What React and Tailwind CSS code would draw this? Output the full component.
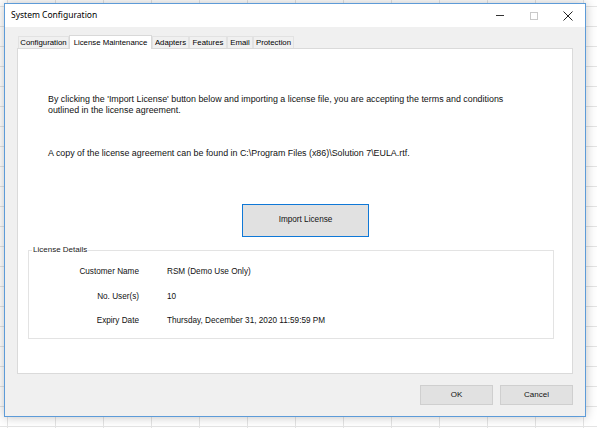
import React from 'react'

const tabs = [
    { name: 'Configuration', w: 'w-[51px]' },
    { name: 'License Maintenance', w: 'w-[83px]', active: true },
    { name: 'Adapters', w: 'w-[37px]' },
    { name: 'Features', w: 'w-[38px]' },
    { name: 'Email', w: 'w-[26px]' },
    { name: 'Protection', w: 'w-[41px]' },
]

const details = [
    { label: 'Customer Name', value: 'RSM (Demo Use Only)' },
    { label: 'No. User(s)', value: '10' },
    { label: 'Expiry Date', value: 'Thursday, December 31, 2020 11:59:59 PM' },
]

const TitleButtons = () => (
    <div className="flex h-full">
        <div className="w-[34px] h-full flex items-center justify-center">
            <div className="w-[8px] h-px bg-[#333]"></div>
        </div>
        <div className="w-[34px] h-full flex items-center justify-center">
            <div className="w-[8px] h-[8px] border border-[#c9c9c9]"></div>
        </div>
        <div className="w-[34px] h-full flex items-center justify-center">
            <svg width="10" height="10" viewBox="0 0 10 10">
                <path d="M0.5 0.5 L9.5 9.5 M9.5 0.5 L0.5 9.5" stroke="#222" strokeWidth="1" fill="none" />
            </svg>
        </div>
    </div>
)

export default function App() {
    return (
        <div className="w-[597px] h-[428px] overflow-hidden bg-white bg-[linear-gradient(to_right,#e4e4e4_1px,transparent_1px),linear-gradient(to_bottom,#e4e4e4_1px,transparent_1px)] [background-size:48px_20px] [background-position:7px_6px] pt-[3px] pl-[4px]"
            style={{ fontFamily: '"Liberation Sans", Arial, sans-serif' }}>
            <div className="w-[582px] h-[414px] border border-[#5d9bd8] bg-[#f0f0f0] flex flex-col shadow-[0_0_10px_rgba(0,0,0,0.25)]">
                {/* title bar */}
                <div className="h-[23px] bg-white flex items-center justify-between shrink-0">
                    <span className="pl-[6px] text-[8.5px] text-black" style={{ fontFamily: '"Noto Sans", sans-serif' }}>System Configuration</span>
                    <TitleButtons />
                </div>

                <div className="flex-1 pt-[8px] pl-[12px] flex flex-col">
                    {/* tab headers */}
                    <div className="flex items-end h-[13px] pl-px relative z-10">
                        {tabs.map((t) => (
                            <div key={t.name}
                                className={`${t.w} flex items-center justify-center text-[7.8px] text-black border border-b-0 ${t.active ? 'h-[14px] bg-white border-[#d9d9d9] -mb-px' : 'h-[12px] bg-[#f0f0f0] border-[#e2e2e2]'}`}>
                                {t.name}
                            </div>
                        ))}
                    </div>

                    {/* tab page */}
                    <div className="w-[556px] h-[326px] bg-white border border-[#dadada] pt-[45px]">
                        <div className="pl-[30px] text-[8.9px] leading-[11px] text-[#111]">
                            <p>By clicking the 'Import License' button below and importing a license file, you are accepting the terms and conditions<br />outlined in the license agreement.</p>
                            <p className="mt-[32px]">A copy of the license agreement can be found in C:\Program Files (x86)\Solution 7\EULA.rtf.</p>
                        </div>

                        <button className="ml-[224px] mt-[45px] w-[127px] h-[33px] bg-[#e1e1e1] border border-[#0f78d7] text-[8.2px] text-[#111] flex items-center justify-center">
                            Import License
                        </button>

                        <div className="ml-[10px] mt-[13px] w-[526px] h-[89px] border border-[#e3e3e3] relative pt-[9px]">
                            <span className="absolute -top-[6px] left-[3px] bg-white px-px text-[8px] leading-[10px] text-[#222]">License Details</span>
                            {details.map((d) => (
                                <div key={d.label} className="flex items-center h-[24.5px] text-[8.2px] text-[#111]">
                                    <div className="w-[110px] text-right">{d.label}</div>
                                    <div className="pl-[28px]">{d.value}</div>
                                </div>
                            ))}
                        </div>
                    </div>

                    {/* dialog buttons */}
                    <div className="flex justify-end gap-[7px] w-[556px] mt-[11px]">
                        <button className="w-[73px] h-[20px] bg-[#e1e1e1] border border-[#cfcfcf] text-[8px] text-[#111]">OK</button>
                        <button className="w-[73px] h-[20px] bg-[#e1e1e1] border border-[#cfcfcf] text-[8px] text-[#111]">Cancel</button>
                    </div>
                </div>
            </div>
        </div>
    )
}
